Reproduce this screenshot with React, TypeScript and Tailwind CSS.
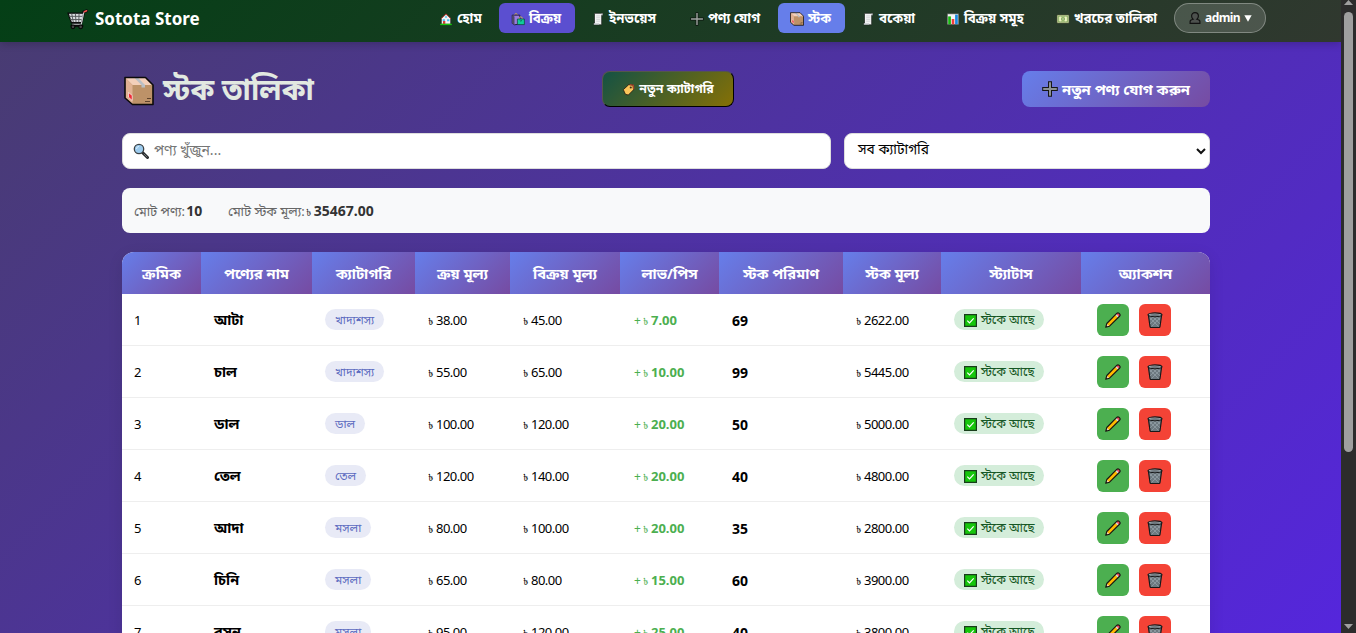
import type { ReactNode } from "react";

const FONT = "font-['Noto_Sans','Noto_Sans_Bengali','Open_Sans',sans-serif]";

type IconProps = { className?: string };

function CartIcon({ className }: IconProps) {
  return (
    <svg className={className} viewBox="0 0 20 20" fill="none">
      <path d="M18.6 1.8 16 2.8 13.4 13H5.6" stroke="#0b0b0b" strokeWidth="2.8" strokeLinejoin="round" strokeLinecap="round" />
      <path d="M1 4h15l-2 9H4.2z" fill="#d9dcdf" stroke="#0b0b0b" strokeWidth="1.2" />
      <path d="M4.5 4.5 6 12.5M8 4.5l.6 8M11.5 4.5l-.3 8M2 7h12.6M3 10h11" stroke="#55585a" strokeWidth=".9" />
      <path d="M16 3.2 13.6 14.6H5" stroke="#c6c9cc" strokeWidth="1.1" />
      <path d="M3.5 16h12" stroke="#0b0b0b" strokeWidth="2" />
      <circle cx="5.7" cy="17" r="1.8" fill="#444" stroke="#050505" />
      <circle cx="13" cy="17" r="1.8" fill="#444" stroke="#050505" />
      <path d="m16.5 2.7 2.2-1" stroke="#f0524d" strokeWidth="1.5" strokeLinecap="round" />
    </svg>
  );
}

function HouseIcon({ className }: IconProps) {
  return (
    <svg className={className} viewBox="0 0 16 16">
      <path d="M2.6 7.5 8 2.5l5.4 5V14H2.6z" fill="#f4f4f4" stroke="#1a1a1a" strokeWidth=".8" />
      <path d="M2.4 7.6 8 2.2l5.6 5.4" fill="none" stroke="#d0443e" strokeWidth="1" />
      <path d="M4.2 8.2h2.6v2.3H4.2zM9.2 8.2h2.6v2.3H9.2zM7 4.8h2v1.9H7z" fill="#4cc2f1" />
      <path d="M4.6 10.3h2.6V14H4.6z" fill="#d83b35" />
      <path d="M1.4 14.2h13.2" stroke="#16c60c" strokeWidth="1.6" />
    </svg>
  );
}

function BagsIcon({ className }: IconProps) {
  return (
    <svg className={className} viewBox="0 0 16 16">
      <path d="M4.2 4V2.8Q5.7.6 7.2 2.8V4" fill="none" stroke="#e5b93c" strokeWidth="1" />
      <path d="M1.4 3.6h8.7v10.2L4 14.6 1.4 13z" fill="#9a7be0" stroke="#1c1530" strokeWidth="1" />
      <path d="M1.4 3.6 4 5v9.5L1.4 13z" fill="#4f4a68" />
      <path d="M9.5 8V6.5q1.7-2 3.4 0V8" fill="none" stroke="#d8c04b" strokeWidth="1" />
      <path d="M7.3 8h8v6.4h-8z" fill="#10cd9b" stroke="#0b4036" strokeWidth=".8" />
      <path d="M10 9.5q1.3 2 2.6 0" fill="none" stroke="#086451" />
    </svg>
  );
}

function ReceiptIcon({ className }: IconProps) {
  return (
    <svg className={className} viewBox="0 0 16 16">
      <path d="M4 1.5h9.3v2.2H12.2v11H3.2V12.6H4z" fill="#f2f3f4" stroke="#1b221d" strokeWidth=".8" />
      <path d="M6 4.500H10.500M6 6.500H10.500M6 8.500H10.500M6 10.500H10.500" stroke="#bfc3c6" strokeWidth=".7" />
      <path d="M12 1.700h1.300v2H12zM3.300 13h6v1.500h-6z" fill="#b4b9bd" />
    </svg>
  );
}

function PlusIcon({ className }: IconProps) {
  return (
    <svg className={className} viewBox="0 0 16 16">
      <path d="M8 2.200v11.600M2.200 8h11.600" stroke="#161616" strokeWidth="4" strokeLinecap="square" />
      <path d="M8 2.200v11.600M2.200 8h11.600" stroke="#8b9094" strokeWidth="2" strokeLinecap="square" />
    </svg>
  );
}

function ThinPlusIcon({ className }: IconProps) {
  return (
    <svg className={className} viewBox="0 0 16 16">
      <path d="M8 2v12M2 8h12" stroke="#0d150f" strokeWidth="3.200" strokeLinecap="square" />
      <path d="M8 2v12M2 8h12" stroke="#a0a5a2" strokeWidth="1.600" strokeLinecap="square" />
    </svg>
  );
}

function PackageIcon({ className }: IconProps) {
  return (
    <svg className={className} viewBox="0 0 30 30">
      <path d="M1 1.5h20.5L29 9v19.5H8.5L1 22z" fill="#bd9268" />
      <path d="M1 1.5h20.5L29 9H8.5z" fill="#f3cfba" />
      <path d="M1 1.5 8.5 9v19.5L1 22z" fill="#e0b193" />
      <path d="m10 1.5 7.5 7.5V11.500H21V9l-7.2-7.5z" fill="#b9bfc5" />
      <path d="m4.5 16.500 3.7 3v5l-3.7-3.3z" fill="#ee2b36" stroke="#fff" strokeWidth=".6" />
      <path d="M23 22.5h4M21 25.5h5" stroke="#5e432c" strokeWidth="1" />
      <path d="M1 1.5h20.5L29 9v19.5H8.5L1 22z" fill="none" stroke="#0c0b0b" strokeWidth="1.6" strokeLinejoin="round" />
    </svg>
  );
}

function ChartIcon({ className }: IconProps) {
  return (
    <svg className={className} viewBox="0 0 16 16">
      <path d="M1.5 2h13v12.3h-13z" fill="#f6f6f6" stroke="#39413b" strokeWidth=".7" />
      <path d="M2.5 5h3.100v9H2.500z" fill="#16b90f" />
      <path d="M6.5 8h3v6h-3z" fill="#ef3e3b" />
      <path d="M10.4 3h3.1v11h-3.1z" fill="#198be0" />
    </svg>
  );
}

function CashIcon({ className }: IconProps) {
  return (
    <svg className={className} viewBox="0 0 16 16">
      <path d="M1 3.2h14v9.600H1z" fill="#e2edb0" stroke="#25311f" strokeWidth=".9" />
      <path d="M2.600 4.800h10.800v6.400H2.600z" fill="none" stroke="#6f9850" strokeWidth=".9" />
      <circle cx="8" cy="8" r="2.300" fill="#7fa75b" />
      <path d="M8 6.600v2.800M5 5.200v5.600M11 5.200v5.600" stroke="#f1f5d6" strokeWidth=".8" />
    </svg>
  );
}

function BustIcon({ className }: IconProps) {
  return (
    <svg className={className} viewBox="0 0 16 16">
      <path d="M8 1.800c2.400 0 3.900 1.800 3.900 4 0 1.600-.7 2.800-1.700 3.600 2.500.5 3.400 1.200 3.400 2.600v2.200H2.400V12c0-1.400.9-2.100 3.400-2.600C4.800 8.600 4.100 7.400 4.100 5.800c0-2.200 1.500-4 3.900-4z" fill="#4d514e" stroke="#111" strokeWidth="1.300" />
    </svg>
  );
}

function TagIcon({ className }: IconProps) {
  return (
    <svg className={className} viewBox="0 0 16 16">
      <path d="M1.600 8.200 8.300 2l5.200.4.700 6L7.800 14.800l-3.600-.9z" fill="#fcc65a" stroke="#2a1b0d" strokeWidth="1" strokeLinejoin="round" />
      <path d="m9.500 2 4.500.8.400 5" fill="none" stroke="#a3452d" strokeWidth="1.600" />
      <circle cx="10.800" cy="5.600" r="1.300" fill="#3c2c1a" />
    </svg>
  );
}

function SearchIcon({ className }: IconProps) {
  return (
    <svg className={className} viewBox="0 0 16 16">
      <path d="m9.500 9.500 5 5" stroke="#26292b" strokeWidth="3" strokeLinecap="round" />
      <path d="m11 11 3 3" stroke="#70777b" strokeWidth="1" strokeLinecap="round" />
      <circle cx="6" cy="6" r="4.700" fill="#9ccbee" stroke="#3d4245" strokeWidth="1.300" />
      <path d="M3.500 6A2.600 2.600 0 0 1 6 3.400" stroke="#d8efff" fill="none" />
    </svg>
  );
}

function CheckIcon({ className }: IconProps) {
  return (
    <svg className={className} viewBox="0 0 13 13">
      <path d="M.6.6h11.800v11.800H.6z" fill="#16c60c" stroke="#183d1b" strokeWidth="1.200" />
      <path d="m3.300 6.600 2.200 2.200 4.200-4.500" fill="none" stroke="#fff" strokeWidth="1.200" />
    </svg>
  );
}

function PencilIcon({ className }: IconProps) {
  return (
    <svg className={className} viewBox="0 0 16 16">
      <path d="M.7 15.300 1.800 11.500 12 1.200q1-.8 2.200.2l.4.400q1 1.200.200 2.200L4.500 14.200z" fill="#ffb900" />
      <path d="m.9 15.100 1-3.300 2.300 2.200z" fill="#f2d7bd" />
      <path d="m11 2.300 1-1q1-.8 2.200.200l.4.400q1 1.200.200 2.200l-1 1z" fill="#f0455e" />
      <path d="m10.300 3 2.700 2.700 1-1L11.300 2z" fill="#d9dde0" />
      <path d="m.9 15.100.5-1.600 1.100 1.100z" fill="#111" />
      <path d="M.7 15.300 1.800 11.500 12 1.200q1-.8 2.200.2l.4.400q1 1.200.200 2.200L4.500 14.200z" fill="none" stroke="#141414" strokeWidth="1.100" strokeLinejoin="round" />
    </svg>
  );
}

function TrashIcon({ className }: IconProps) {
  return (
    <svg className={className} viewBox="0 0 16 16">
      <path d="M1.300 2.500h13.400L13 14.500q-.1 1-1.200 1H4.200q-1.100 0-1.200-1z" fill="#6d7980" stroke="#17191a" strokeWidth="1.200" strokeLinejoin="round" />
      <path d="m3 6 8.500 8.500M6 5l7 7M10 5l3 3M13 6l-8.500 8.500M10 5l-7 7M6 5 3 8" stroke="#9eabb2" strokeWidth=".6" />
      <ellipse cx="8" cy="2.800" rx="6.900" ry="1.900" fill="#a8b2b8" stroke="#17191a" strokeWidth="1.100" />
      <ellipse cx="8" cy="3" rx="5" ry=".8" fill="#59646a" />
    </svg>
  );
}

function NavItem({ icon, label, className }: { icon: ReactNode; label: string; className: string }) {
  return (
    <a className={`flex h-[30px] shrink-0 items-center rounded-[6px] pl-3 text-[13.3px] font-bold whitespace-nowrap text-white ${className}`}>
      {icon}
      <span className="mt-0.5 ml-1">{label}</span>
    </a>
  );
}

const ICON = "mt-px size-[14px] shrink-0";

function Header() {
  return (
    <header className="z-10 flex h-[42px] shrink-0 items-start bg-linear-[135deg,#043f16_0%,#30382f_100%] pt-[3px] pl-[67px] shadow-[0_2px_8px_rgba(0,0,0,0.2)]">
      <div className="flex h-8 w-[360px] shrink-0 items-center gap-[7px] text-[17px] font-bold text-white">
        <CartIcon className="size-[21px]" />
        <span>Sotota Store</span>
      </div>
      <nav className="flex shrink-0">
        <NavItem className="w-[72px]" icon={<HouseIcon className={ICON} />} label="হোম" />
        <NavItem className="w-[76px] bg-[#5b4fd0]" icon={<BagsIcon className={ICON} />} label="বিক্রয়" />
        <NavItem className="ml-1 w-[99px]" icon={<ReceiptIcon className={ICON} />} label="ইনভয়েস" />
        <NavItem className="w-[100px]" icon={<ThinPlusIcon className={ICON} />} label="পণ্য যোগ" />
        <NavItem className="w-[67px] bg-[#667eea]" icon={<PackageIcon className={ICON} />} label="স্টক" />
        <NavItem className="ml-1 w-[85px]" icon={<ReceiptIcon className={ICON} />} label="বকেয়া" />
        <NavItem className="w-[110px]" icon={<ChartIcon className={ICON} />} label="বিক্রয় সমূহ" />
        <NavItem className="w-[130px]" icon={<CashIcon className={ICON} />} label="খরচের তালিকা" />
      </nav>
      <button className="flex h-[30px] w-[92px] shrink-0 items-center rounded-full border border-white/30 bg-white/15 pl-[13px] text-[12px] font-bold tracking-[-0.6px] text-white">
        <BustIcon className="size-[14px]" />
        <span className="ml-[3px] w-[35px]">admin</span>
        <svg className="mt-px ml-1 h-[7px] w-2" viewBox="0 0 8 7"><path d="M.3.300h7.400L4 6.800z" fill="#fff" /></svg>
      </button>
    </header>
  );
}

const COLUMNS = [
  { label: "ক্রমিক", width: "w-[79px]" },
  { label: "পণ্যের নাম", width: "w-[111px]" },
  { label: "ক্যাটাগরি", width: "w-[103px]" },
  { label: "ক্রয় মূল্য", width: "w-[95px]" },
  { label: "বিক্রয় মূল্য", width: "w-[110px]" },
  { label: "লাভ/পিস", width: "w-[99px]" },
  { label: "স্টক পরিমাণ", width: "w-[124px]" },
  { label: "স্টক মূল্য", width: "w-[98px]" },
  { label: "স্ট্যাটাস", width: "w-[140px]" },
  { label: "অ্যাকশন", width: "w-[129px]" },
];

const ROWS = [
  ["আটা", "খাদ্যশস্য", "38.00", "45.00", "7.00", "69", "2622.00"],
  ["চাল", "খাদ্যশস্য", "55.00", "65.00", "10.00", "99", "5445.00"],
  ["ডাল", "ডাল", "100.00", "120.00", "20.00", "50", "5000.00"],
  ["তেল", "তেল", "120.00", "140.00", "20.00", "40", "4800.00"],
  ["আদা", "মসলা", "80.00", "100.00", "20.00", "35", "2800.00"],
  ["চিনি", "মসলা", "65.00", "80.00", "15.00", "60", "3900.00"],
  ["রসুন", "মসলা", "95.00", "120.00", "25.00", "40", "3800.00"],
];

function Money({ value }: { value: string }) {
  return (
    <span className="inline-flex items-baseline pt-0.5">
      <span className="w-2 text-[9px]">৳</span>
      <span className="tracking-[-0.5px]">{value}</span>
    </span>
  );
}

function Profit({ value }: { value: string }) {
  return (
    <span className="inline-flex items-baseline pt-0.5 text-[#4caf50]">
      <span className="w-[9px] text-[12px]">+</span>
      <span className="w-2 text-[9px]">৳</span>
      <span className="font-bold">{value}</span>
    </span>
  );
}

function StockTable() {
  return (
    <table className="mt-[19px] w-[1088px] table-fixed border-separate border-spacing-0 overflow-hidden rounded-t-[12px] bg-white text-[13px] text-black shadow-[0_4px_15px_rgba(0,0,0,0.1)]">
      <thead>
        <tr>
          {COLUMNS.map((c) => (
            <th key={c.label} className={`h-[42px] p-0 text-center text-[14.7px] font-bold whitespace-nowrap text-white bg-linear-[135deg,#667eea_0%,#764ba2_100%] ${c.width}`}>
              {c.label}
            </th>
          ))}
        </tr>
      </thead>
      <tbody className="[&_td]:h-[52px] [&_td]:border-b [&_td]:border-[#eee] [&_td]:p-0 [&_td]:pl-[13px] [&_td]:whitespace-nowrap">
        {ROWS.map(([name, category, buy, sell, profit, qty, total], i) => (
          <tr key={name}>
            <td><span className="inline-block pt-0.5 -indent-px">{i + 1}</span></td>
            <td className="text-[14.4px] font-bold">{name}</td>
            <td>
              <span className="inline-flex h-[21px] items-center rounded-full bg-[#e8eaf6] px-[10px] text-[11.8px] text-[#5c6bc0]">{category}</span>
            </td>
            <td><Money value={buy} /></td>
            <td><Money value={sell} /></td>
            <td className="pl-[14px]!"><Profit value={profit} /></td>
            <td className="text-[14px] font-bold"><span className="inline-block pt-px">{qty}</span></td>
            <td><Money value={total} /></td>
            <td>
              <div className="flex h-[21px] w-[90px] items-center gap-[4px] rounded-full bg-[#d4edda] pl-[10px] text-[12px] text-[#155724]">
                <CheckIcon className="mt-0.5 size-[13px] shrink-0" />
                <span>স্টকে আছে</span>
              </div>
            </td>
            <td>
              <div className="ml-[3px] flex gap-[10px]">
                <button className="grid size-8 place-items-center rounded-[6px] bg-[#4caf50]"><PencilIcon className="size-4" /></button>
                <button className="grid size-8 place-items-center rounded-[6px] bg-[#f44336]"><TrashIcon className="size-4" /></button>
              </div>
            </td>
          </tr>
        ))}
      </tbody>
    </table>
  );
}

function Scrollbar() {
  return (
    <div className="flex h-full w-[15px] shrink-0 flex-col items-center bg-[#2c2c2c]">
      <svg className="h-3 w-full shrink-0" viewBox="0 0 15 12"><path d="M3 5 7.500 0 12 5z" fill="#9f9f9f" /></svg>
      <div className="h-[440px] w-[9px] shrink-0 rounded-full bg-[#9f9f9f]" />
      <div className="grow" />
      <svg className="h-3 w-full shrink-0" viewBox="0 0 15 12"><path d="M3 3h9L7.500 8z" fill="#9f9f9f" /></svg>
    </div>
  );
}

export default function App() {
  return (
    <div className={`flex h-[633px] w-[1356px] overflow-hidden ${FONT}`}>
      <div className="flex h-full w-[1341px] flex-col overflow-hidden bg-linear-[135deg,#483c70_0%,#5526dc_100%]">
        <Header />
        <main className="flex flex-col px-[122px] pt-[29px]">
          <div className="flex h-9 w-[1088px] items-center">
            <h1 className="flex w-[214px] items-center gap-[9px] pl-[2px] text-[29.5px] font-bold whitespace-nowrap text-[#e2e9e1]">
              <PackageIcon className="mt-1 size-[30px] shrink-0" />
              <span>স্টক তালিকা</span>
            </h1>
            <button className="ml-[266px] flex h-9 w-[132px] items-center justify-center gap-1 rounded-[8px] border border-t-[#55564c] border-r-black border-b-black border-l-[#55564c] bg-linear-[135deg,#145244,#857006] text-[12.4px] font-bold whitespace-nowrap text-white">
              <TagIcon className="size-[13px]" />
              নতুন ক্যাটাগরি
            </button>
            <button className="ml-auto flex h-9 w-[188px] items-center justify-center gap-1 rounded-[8px] bg-linear-[135deg,#667eea,#764ba2] text-[14.8px] font-bold whitespace-nowrap text-white">
              <PlusIcon className="size-4" />
              <span>নতুন পণ্য যোগ করুন</span>
            </button>
          </div>
          <div className="mt-[26px] flex w-[1088px] gap-[13px]">
            <div className="flex h-9 w-[709px] items-center gap-[5px] rounded-[8px] border border-[#ddd] bg-white pl-[10px] text-[14px] text-[#757575]">
              <SearchIcon className="size-4" />
              <span className="pb-[3px]">পণ্য খুঁজুন...</span>
            </div>
            <div className="flex h-9 w-[366px] items-center justify-between rounded-[8px] border border-[#ddd] bg-white pr-[3px] pl-[13px] text-[13.8px] text-black">
              <span className="pb-[3px]">সব ক্যাটাগরি</span>
              <svg className="size-[10px]" viewBox="0 0 10 10" fill="none"><path d="m1 3 4 4 4-4" stroke="#111" strokeWidth="2" /></svg>
            </div>
          </div>
          <div className="mt-[19px] flex h-[45px] w-[1088px] items-center gap-[26px] rounded-[8px] bg-[#f8f9fa] pt-px pl-3 text-[13px] text-[#666]">
            <span>মোট পণ্য: <b className="-ml-0.5 text-[14px] tracking-[-0.2px] text-[#333]">10</b></span>
            <span>মোট স্টক মূল্য: <span className="-ml-0.5 text-[9px] text-[#333]">৳</span> <b className="-ml-px text-[14px] text-[#333]">35467.00</b></span>
          </div>
          <StockTable />
        </main>
      </div>
      <Scrollbar />
    </div>
  );
}
